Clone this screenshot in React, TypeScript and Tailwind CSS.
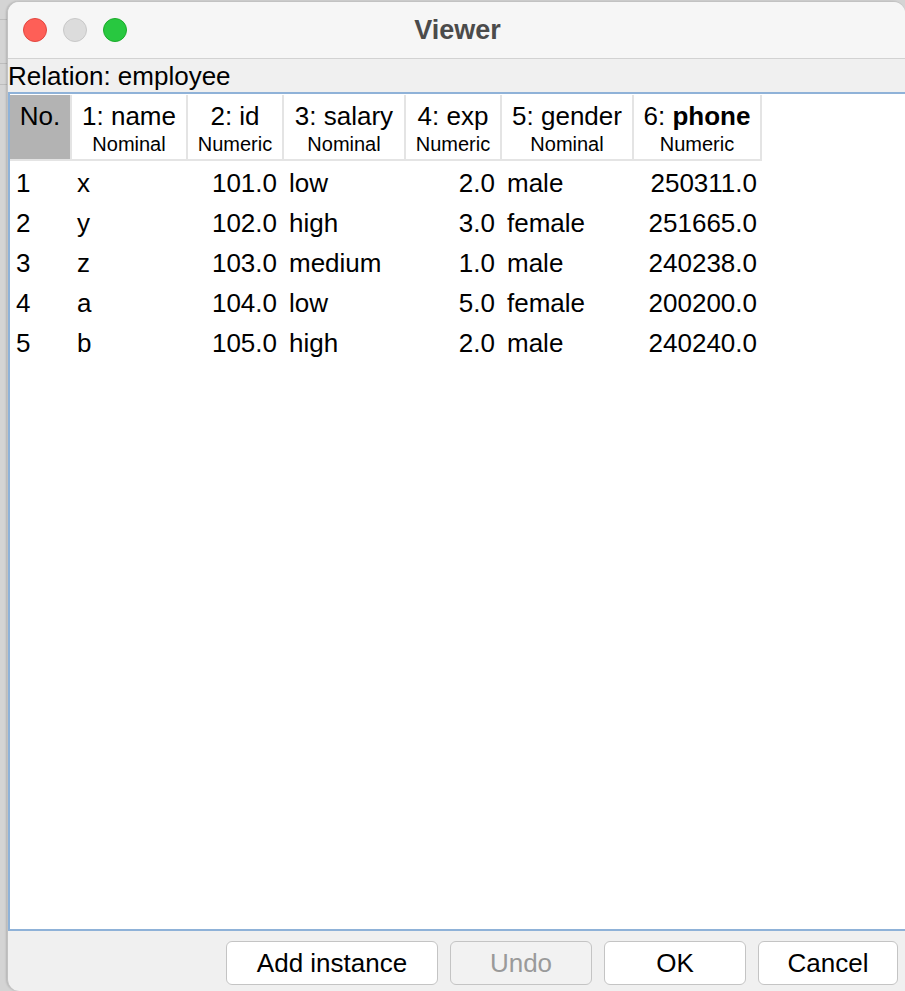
const COLS = [
  { title: '1: name', type: 'Nominal', align: 'left' },
  { title: '2: id', type: 'Numeric', align: 'right' },
  { title: '3: salary', type: 'Nominal', align: 'left' },
  { title: '4: exp', type: 'Numeric', align: 'right' },
  { title: '5: gender', type: 'Nominal', align: 'left' },
  { title: '6: phone', type: 'Numeric', align: 'right', bold: true },
];

const ROWS = [
  ['x', '101.0', 'low', '2.0', 'male', '250311.0'],
  ['y', '102.0', 'high', '3.0', 'female', '251665.0'],
  ['z', '103.0', 'medium', '1.0', 'male', '240238.0'],
  ['a', '104.0', 'low', '5.0', 'female', '200200.0'],
  ['b', '105.0', 'high', '2.0', 'male', '240240.0'],
];

const GRID = 'grid grid-cols-[60px_116px_96px_122px_96px_132px_130px]';

function Button({ label, disabled = false, width }: { label: string; disabled?: boolean; width: string }) {
  return (
    <div
      className={`${width} h-[44px] flex items-center justify-center rounded-[6px] border border-[#c4c4c4] text-[26px] ${
        disabled ? 'bg-[#f2f2f2] text-[#9a9a9a]' : 'bg-white text-black'
      }`}
    >
      {label}
    </div>
  );
}

export default function App() {
  return (
    <div
      className="w-[905px] h-[991px] flex bg-[#d4d4d4] overflow-hidden"
      style={{ fontFamily: '"Liberation Sans", Arial, sans-serif' }}
    >
      {/* window behind */}
      <div className="w-[7px] flex flex-col">
        <div className="h-[20px] border-b border-[#bdbdbd]" />
        <div className="h-[44px] border-b border-[#bdbdbd]" />
        <div className="h-[21px] border-b border-[#bdbdbd]" />
        <div className="flex-1" />
      </div>

      {/* Viewer window */}
      <div className="flex-1 mt-[1px] flex flex-col rounded-t-[12px] rounded-bl-[12px] bg-[#f0f0f0] border-l border-t border-[#c2c2c2] overflow-hidden shadow-[-1px_0_2px_rgba(0,0,0,0.15)]">
        {/* title bar */}
        <div className="relative h-[57px] shrink-0 bg-[#f6f6f6] border-b border-[#d2d2d2] flex items-center justify-center">
          <div className="absolute left-[15px] top-[16px] flex gap-[16px]">
            <div className="w-[24px] h-[24px] rounded-full bg-[#fe5f57] border border-[#e2463f]" />
            <div className="w-[24px] h-[24px] rounded-full bg-[#dcdcdc] border border-[#c8c8c8]" />
            <div className="w-[24px] h-[24px] rounded-full bg-[#28c840] border border-[#1aab29]" />
          </div>
          <span className="text-[27px] font-bold text-[#4b4b4b] pl-[2px]">Viewer</span>
        </div>

        {/* relation label */}
        <div className="h-[33px] shrink-0 flex items-center text-[26px] text-black leading-none">
          Relation: employee
        </div>

        {/* table panel */}
        <div className="flex-1 bg-white border-t-2 border-l-2 border-b-2 border-[#8fb2d8] pt-[1px]">
          <div className={`${GRID} h-[66px] border-b-2 border-[#e4e4e4] w-fit`}>
            <div className="bg-[#b3b3b3] flex flex-col items-center justify-center pt-[3px] text-black">
              <div className="text-[26px] leading-[30px]">No.</div>
              <div className="h-[26px]" />
            </div>
            {COLS.map((c, i) => (
              <div key={i} className="flex flex-col items-center justify-center pt-[3px] border-l-2 border-[#e4e4e4] last:border-r-2">
                <div className="text-[26px] leading-[30px] text-black">
                  {c.bold ? (
                    <>
                      6: <span className="font-bold">phone</span>
                    </>
                  ) : (
                    c.title
                  )}
                </div>
                <div className="text-[20px] leading-[26px] text-black">{c.type}</div>
              </div>
            ))}
          </div>
          <div className="pt-[2px]">
            {ROWS.map((r, ri) => (
              <div key={ri} className={`${GRID} h-[40px] items-center text-[26px] text-black`}>
                <div className="pl-[6px]">{ri + 1}</div>
                {r.map((v, ci) => (
                  <div
                    key={ci}
                    className={COLS[ci].align === 'right' ? 'text-right pr-[5px]' : 'text-left pl-[7px]'}
                  >
                    {v}
                  </div>
                ))}
              </div>
            ))}
          </div>
        </div>

        {/* buttons */}
        <div className="h-[60px] shrink-0 flex items-start justify-end gap-[12px] pt-[10px] pr-[7px]">
          <Button label="Add instance" width="w-[212px]" />
          <Button label="Undo" disabled width="w-[142px]" />
          <Button label="OK" width="w-[142px]" />
          <Button label="Cancel" width="w-[140px]" />
        </div>
      </div>
    </div>
  );
}
